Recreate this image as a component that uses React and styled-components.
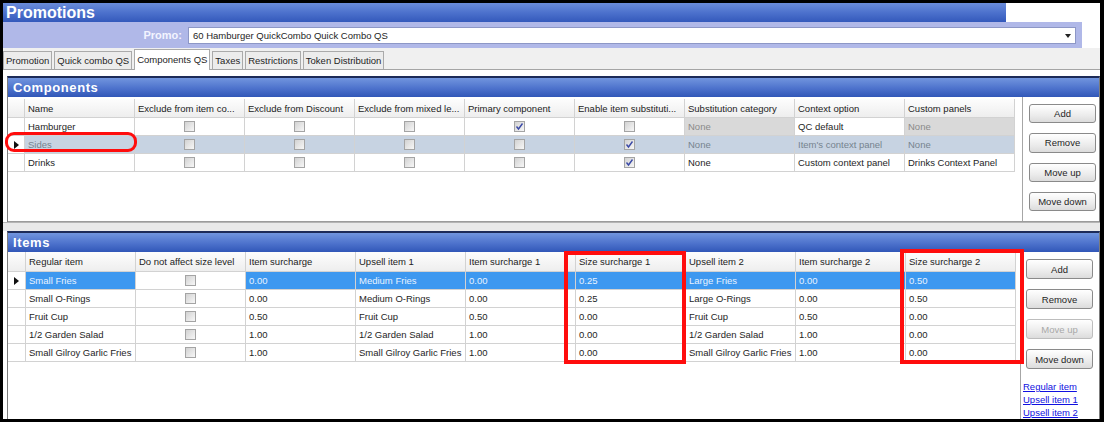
import React from "react";
import styled, { createGlobalStyle, css } from "styled-components";

const Global = createGlobalStyle`
  html, body { margin: 0; padding: 0; background: #000; }
  body { font-family: "Liberation Sans", Arial, sans-serif; font-size: 9.5px; color: #1e1e1e; }
  * { box-sizing: border-box; }
`;

const Frame = styled.div`
  position: relative;
  width: 1104px;
  height: 422px;
  border: 3px solid #000;
  border-right-width: 4px;
  background: #fff;
  display: flex;
  flex-direction: column;
  overflow: hidden;
`;

const TitleBar = styled.div`
  display: flex;
  height: 19px;
  flex: none;
`;

const TitleBlue = styled.div`
  width: 1003px;
  background: linear-gradient(#6a8cda, #4a6fcb 55%, #3459bb);
  color: #fff;
  font-size: 16px;
  font-weight: bold;
  line-height: 19px;
  padding-left: 3px;
`;

const Filler = styled.div`
  flex: 1;
  background: ${(p) => p.$bg || "#fff"};
`;

const PromoRow = styled.div`
  display: flex;
  height: 26px;
  flex: none;
`;

const PromoBand = styled.div`
  width: 1079px;
  background: #b0b8e8;
  display: flex;
  align-items: flex-start;
  padding-top: 5px;
`;

const PromoLabel = styled.div`
  width: 179px;
  text-align: right;
  font-size: 11px;
  font-weight: bold;
  color: #f3f4ff;
  line-height: 17px;
`;

const Combo = styled.div`
  margin-left: 6px;
  width: 888px;
  height: 17px;
  background: #fff;
  border: 1px solid #8d97c6;
  display: flex;
  align-items: center;
  justify-content: space-between;
  padding: 0 4px;
  font-size: 9.5px;
`;

const TabsRow = styled.div`
  display: flex;
  align-items: flex-end;
  height: 22px;
  flex: none;
  background: #f0f0f0;
  border-bottom: 1px solid #a5a5a5;
`;

const Tab = styled.div`
  height: 18px;
  line-height: 17px;
  padding: 0 2px;
  margin-right: 2px;
  border: 1px solid #aaaaaa;
  border-bottom: none;
  background: #ececec;
  font-size: 9.5px;
  white-space: nowrap;
  ${(p) =>
    p.$active &&
    css`
      height: 21px;
      line-height: 19px;
      background: #fff;
      margin-bottom: -1px;
    `}
`;

const Spacer = styled.div`
  height: ${(p) => p.$h}px;
  flex: none;
  background: ${(p) => p.$bg || "#fff"};
  ${(p) => p.$line && css`border-top: 1px solid #b4b4b4;`}
`;

const Panel = styled.div`
  margin-left: 4px;
  width: 1093px;
  border-top: 2px solid #1d2b58;
  border-left: 1px solid #7c7c7c;
  border-right: 1px solid #7c7c7c;
  display: flex;
  flex-direction: column;
  flex: ${(p) => (p.$grow ? 1 : "none")};
`;

const PanelHeader = styled.div`
  height: 19px;
  background: linear-gradient(#7195de, #4d72cc 55%, #3157b8);
  color: #fff;
  font-size: 13px;
  font-weight: bold;
  letter-spacing: 0.6px;
  line-height: 19px;
  padding-left: 5px;
`;

const PanelBody = styled.div`
  display: flex;
  height: ${(p) => (p.$h ? `${p.$h}px` : "auto")};
  flex: ${(p) => (p.$h ? "none" : 1)};
  ${(p) => p.$h && css`border-bottom: 1px solid #9c9c9c;`}
`;

const GridArea = styled.div`
  width: ${(p) => p.$w}px;
  border-right: 1px solid #a6a6a6;
  padding-top: ${(p) => p.$pt || 0}px;
`;

const GridRow = styled.div`
  display: grid;
  grid-template-columns: ${(p) => p.$cols};
  height: ${(p) => p.$h}px;
`;

const tones = {
  normal: css`background: #fff; color: #1e1e1e;`,
  gray: css`background: #d9d9d9; color: #8a8a8a;`,
  sel: css`background: #c7d3e2; color: #76838f;`,
  hi: css`background: #3d98f0; color: #e8f2ff;`,
  head: css`background: linear-gradient(#fdfdfd, #eeeeee); color: #222;`,
};

const Cell = styled.div`
  border-right: 1px solid #d2d2d2;
  border-bottom: 1px solid #d2d2d2;
  padding-left: 3px;
  display: flex;
  align-items: center;
  justify-content: ${(p) => (p.$center ? "center" : "flex-start")};
  white-space: nowrap;
  overflow: hidden;
  font-size: 9.5px;
  ${(p) => tones[p.$tone || "normal"]}
  ${(p) => p.$center && css`padding-left: 0;`}
`;

const RowHead = styled.div`
  border-right: 1px solid #d2d2d2;
  border-bottom: 1px solid #d2d2d2;
  background: ${(p) => (p.$head ? "linear-gradient(#fdfdfd, #eeeeee)" : "#fff")};
  display: flex;
  align-items: center;
  justify-content: center;
`;

const Box = styled.span`
  width: 11px;
  height: 11px;
  border: 1px solid #a4a4a4;
  background: linear-gradient(135deg, #d2d2d2, #f7f7f7);
  display: inline-flex;
  align-items: center;
  justify-content: center;
`;

const ButtonCol = styled.div`
  flex: 1;
  display: flex;
  flex-direction: column;
  padding: 7px 0 0 ${(p) => p.$pl}px;
`;

const Button = styled.div`
  width: 67px;
  height: 20px;
  margin-bottom: 10px;
  border: 1px solid ${(p) => (p.$disabled ? "#bdbdbd" : "#8a8a8a")};
  border-radius: 3px;
  background: linear-gradient(#ffffff, #ececec 60%, #dcdcdc);
  color: ${(p) => (p.$disabled ? "#a8a8a8" : "#1e1e1e")};
  font-size: 9.5px;
  display: flex;
  align-items: center;
  justify-content: center;
`;

const Links = styled.div`
  display: flex;
  flex-direction: column;
  margin: 1px 0 0 -3px;
`;

const LinkText = styled.a`
  color: #1010e0;
  text-decoration: underline;
  font-size: 9.5px;
  line-height: 13px;
`;

const Mark = styled.div`
  position: absolute;
  left: ${(p) => p.$x - 3}px;
  top: ${(p) => p.$y - 3}px;
  width: ${(p) => p.$w}px;
  height: ${(p) => p.$h}px;
  border: ${(p) => p.$b}px solid #ff0d0d;
  border-radius: ${(p) => p.$r || 0}px;
  pointer-events: none;
`;

const Check = ({ on }) => (
  <Box>
    {on && (
      <svg width="9" height="9" viewBox="0 0 9 9">
        <polyline points="1.5,4.5 3.5,7 7.5,1.5" fill="none" stroke="#3a49a6" strokeWidth="1.4" />
      </svg>
    )}
  </Box>
);

const Arrow = () => (
  <svg width="5" height="8" viewBox="0 0 5 8">
    <polygon points="0,0 5,4 0,8" fill="#111" />
  </svg>
);

const compCols = "17px repeat(9, 110px)";
const itemCols = "18px repeat(9, 110px)";

const compHead = [
  "Name",
  "Exclude from item co...",
  "Exclude from Discount",
  "Exclude from mixed le...",
  "Primary component",
  "Enable item substituti...",
  "Substitution category",
  "Context option",
  "Custom panels",
];

const compRows = [
  {
    sel: false,
    cells: [
      { t: "Hamburger" },
      { c: false }, { c: false }, { c: false }, { c: true }, { c: false },
      { t: "None", tone: "gray" },
      { t: "QC default" },
      { t: "None", tone: "gray" },
    ],
  },
  {
    sel: true,
    cells: [
      { t: "Sides" },
      { c: false }, { c: false }, { c: false }, { c: false }, { c: true },
      { t: "None" },
      { t: "Item's context panel" },
      { t: "None" },
    ],
  },
  {
    sel: false,
    cells: [
      { t: "Drinks" },
      { c: false }, { c: false }, { c: false }, { c: false }, { c: true },
      { t: "None" },
      { t: "Custom context panel" },
      { t: "Drinks Context Panel" },
    ],
  },
];

const itemHead = [
  "Regular item",
  "Do not affect size level",
  "Item surcharge",
  "Upsell item 1",
  "Item surcharge 1",
  "Size surcharge 1",
  "Upsell item 2",
  "Item surcharge 2",
  "Size surcharge 2",
];

const itemRows = [
  ["Small Fries", "0.00", "Medium Fries", "0.00", "0.25", "Large Fries", "0.00", "0.50"],
  ["Small O-Rings", "0.00", "Medium O-Rings", "0.00", "0.25", "Large O-Rings", "0.00", "0.50"],
  ["Fruit Cup", "0.50", "Fruit Cup", "0.50", "0.00", "Fruit Cup", "0.50", "0.00"],
  ["1/2 Garden Salad", "1.00", "1/2 Garden Salad", "1.00", "0.00", "1/2 Garden Salad", "1.00", "0.00"],
  ["Small Gilroy Garlic Fries", "1.00", "Small Gilroy Garlic Fries", "1.00", "0.00", "Small Gilroy Garlic Fries", "1.00", "0.00"],
];

const tabs = ["Promotion", "Quick combo QS", "Components QS", "Taxes", "Restrictions", "Token Distribution"];

export default function App() {
  return (
    <>
      <Global />
      <Frame>
        <TitleBar>
          <TitleBlue>Promotions</TitleBlue>
          <Filler />
        </TitleBar>

        <PromoRow>
          <PromoBand>
            <PromoLabel>Promo:</PromoLabel>
            <Combo>
              <span>60 Hamburger QuickCombo Quick Combo QS</span>
              <svg width="6" height="4" viewBox="0 0 6 4">
                <polygon points="0,0 6,0 3,4" fill="#222" />
              </svg>
            </Combo>
          </PromoBand>
          <Filler />
        </PromoRow>

        <TabsRow>
          {tabs.map((t) => (
            <Tab key={t} $active={t === "Components QS"}>
              {t}
            </Tab>
          ))}
        </TabsRow>

        <Spacer $h={6} />

        <Panel>
          <PanelHeader>Components</PanelHeader>
          <PanelBody $h={125}>
            <GridArea $w={1015} $pt={2}>
              <GridRow $cols={compCols} $h={19}>
                <RowHead $head />
                {compHead.map((h) => (
                  <Cell key={h} $tone="head">{h}</Cell>
                ))}
              </GridRow>
              {compRows.map((r, i) => (
                <GridRow key={i} $cols={compCols} $h={18}>
                  <RowHead>{r.sel && <Arrow />}</RowHead>
                  {r.cells.map((c, j) =>
                    "c" in c ? (
                      <Cell key={j} $center $tone={r.sel ? "sel" : "normal"}>
                        <Check on={c.c} />
                      </Cell>
                    ) : (
                      <Cell key={j} $tone={r.sel ? "sel" : c.tone || "normal"}>
                        {c.t}
                      </Cell>
                    )
                  )}
                </GridRow>
              ))}
            </GridArea>
            <ButtonCol $pl={6}>
              <Button>Add</Button>
              <Button>Remove</Button>
              <Button>Move up</Button>
              <Button>Move down</Button>
            </ButtonCol>
          </PanelBody>
        </Panel>

        <Spacer $h={9} $bg="#e9e9e9" $line />

        <Panel $grow>
          <PanelHeader>Items</PanelHeader>
          <PanelBody>
            <GridArea $w={1013}>
              <GridRow $cols={itemCols} $h={20}>
                <RowHead $head />
                {itemHead.map((h) => (
                  <Cell key={h} $tone="head">{h}</Cell>
                ))}
              </GridRow>
              {itemRows.map((r, i) => {
                const tone = i === 0 ? "hi" : "normal";
                return (
                  <GridRow key={i} $cols={itemCols} $h={18}>
                    <RowHead>{i === 0 && <Arrow />}</RowHead>
                    <Cell $tone={tone}>{r[0]}</Cell>
                    <Cell $center>
                      <Check on={false} />
                    </Cell>
                    {r.slice(1).map((v, j) => (
                      <Cell key={j} $tone={tone}>{v}</Cell>
                    ))}
                  </GridRow>
                );
              })}
            </GridArea>
            <ButtonCol $pl={5}>
              <Button>Add</Button>
              <Button>Remove</Button>
              <Button $disabled>Move up</Button>
              <Button>Move down</Button>
              <Links>
                <LinkText>Regular item</LinkText>
                <LinkText>Upsell item 1</LinkText>
                <LinkText>Upsell item 2</LinkText>
              </Links>
            </ButtonCol>
          </PanelBody>
        </Panel>

        <Mark $x={5} $y={132} $w={132} $h={20} $b={3} $r={9} />
        <Mark $x={564} $y={251} $w={122} $h={113} $b={4} />
        <Mark $x={900} $y={249} $w={124} $h={115} $b={4} />
      </Frame>
    </>
  );
}
